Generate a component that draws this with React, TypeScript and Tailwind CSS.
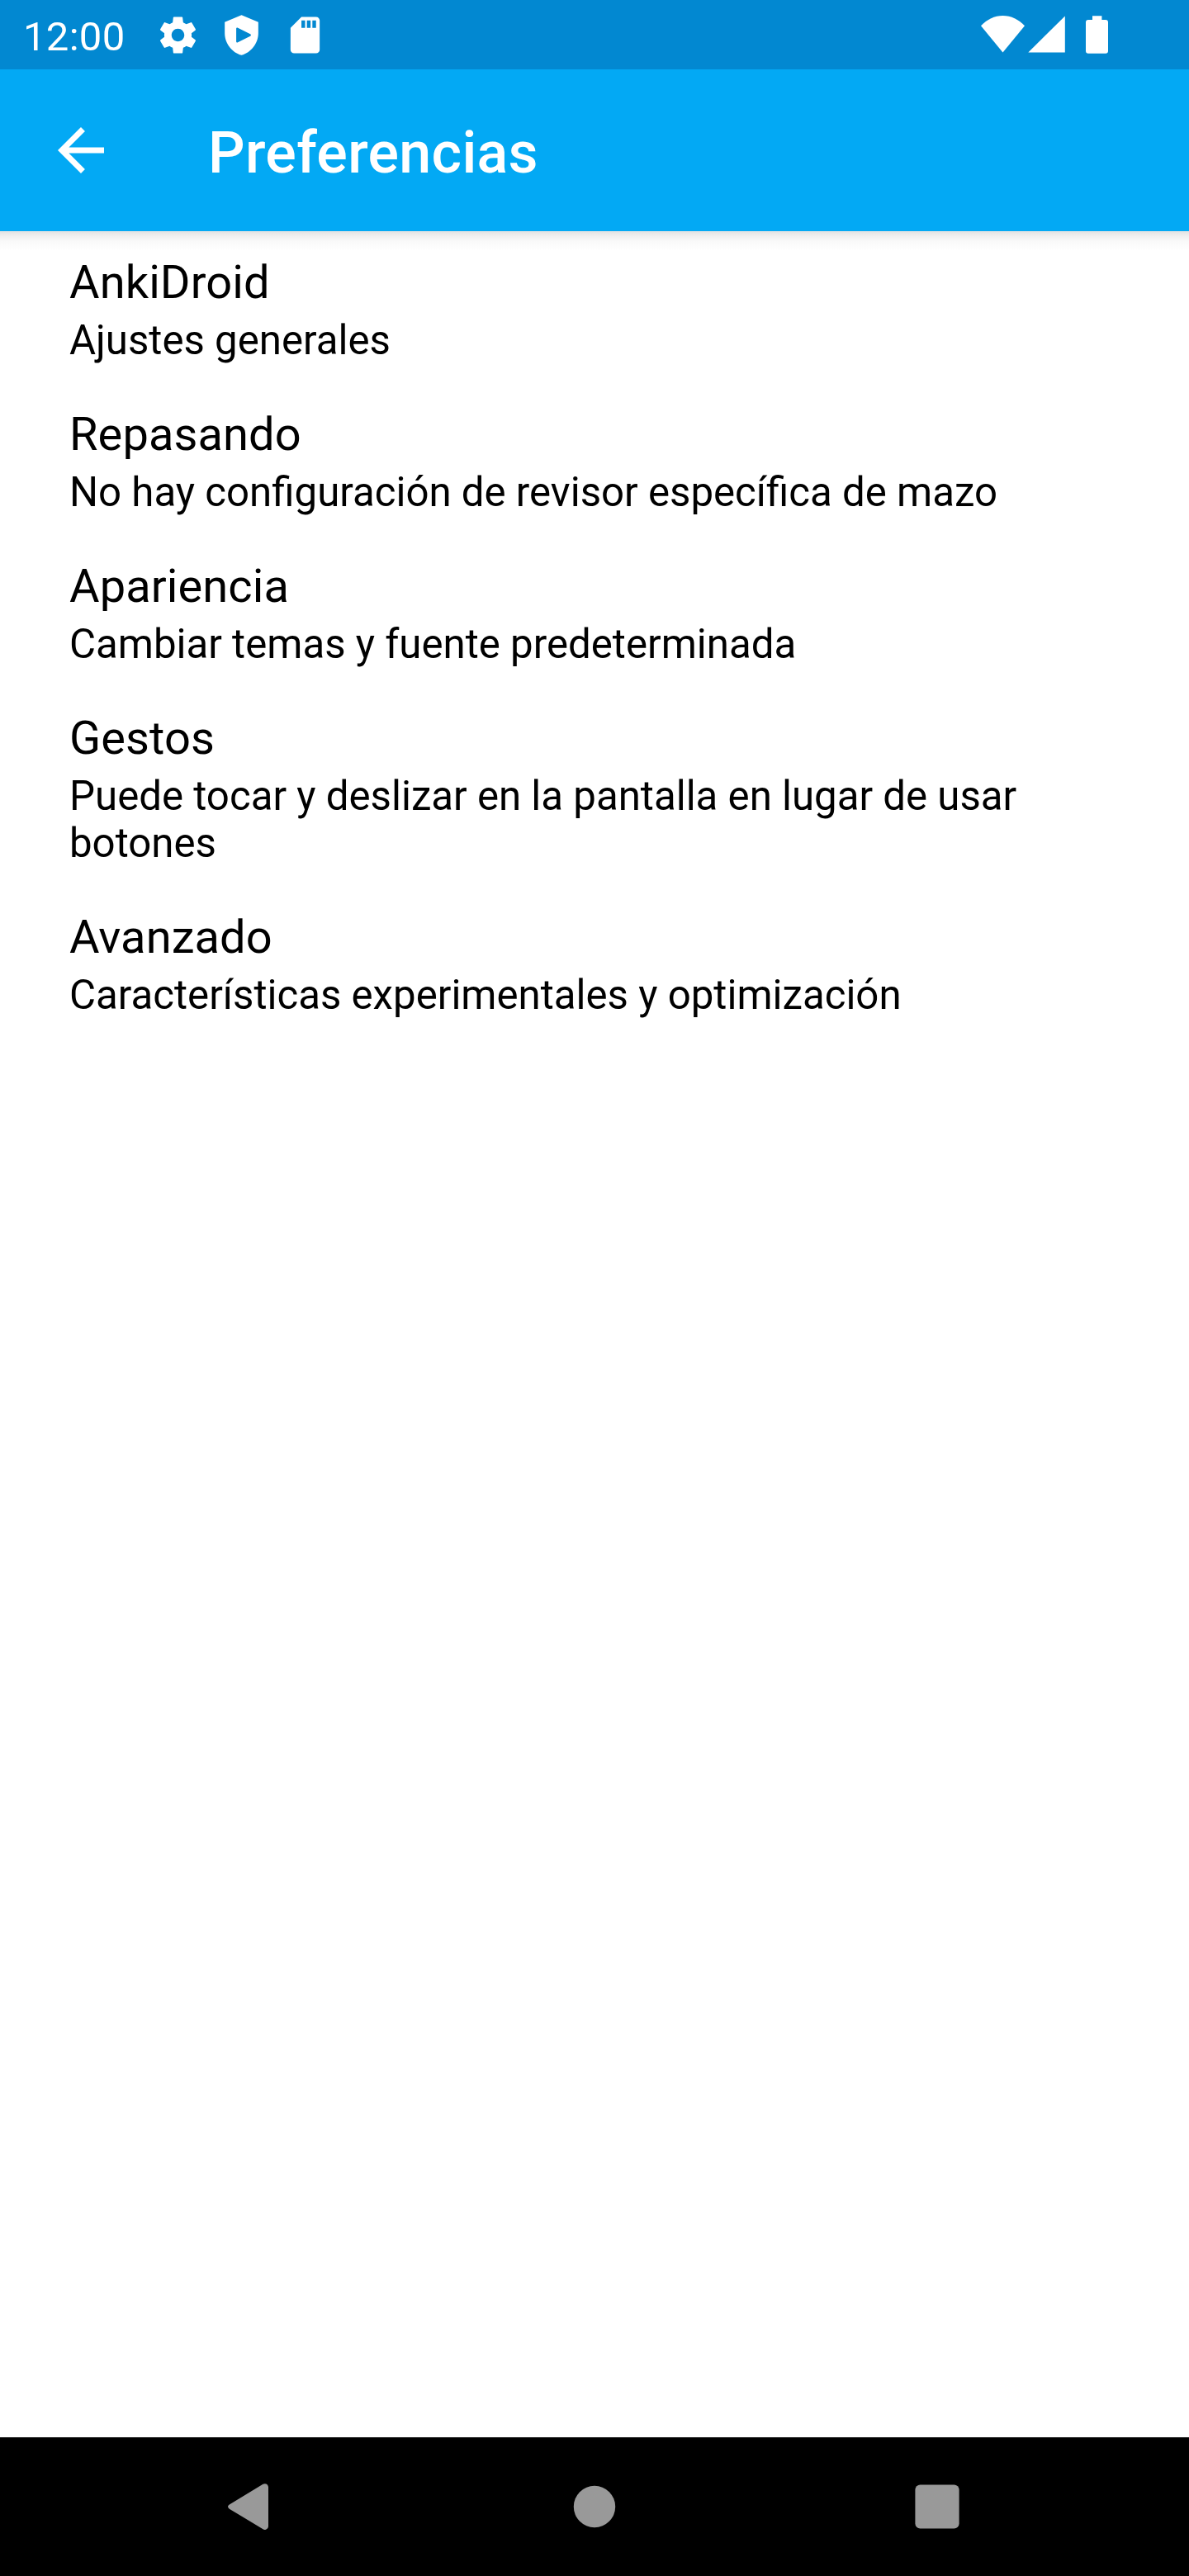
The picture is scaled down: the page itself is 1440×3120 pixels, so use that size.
import React from "react";

const preferences = [
  { title: "AnkiDroid", summary: "Ajustes generales" },
  { title: "Repasando", summary: "No hay configuración de revisor específica de mazo" },
  { title: "Apariencia", summary: "Cambiar temas y fuente predeterminada" },
  { title: "Gestos", summary: "Puede tocar y deslizar en la pantalla en lugar de usar botones" },
  { title: "Avanzado", summary: "Características experimentales y optimización" },
];

function StatusIcon({ d }: { d: string }) {
  return (
    <svg viewBox="0 0 24 24" className="h-[53px] w-[53px] shrink-0" fill="#fff" fillRule="evenodd">
      <path d={d} />
    </svg>
  );
}

function StatusBar() {
  return (
    <div className="flex h-[84px] justify-between bg-[#0288d1] pl-[28px] pr-[98px]">
      <div className="flex pt-4">
        <span className="w-[161px] text-[49px] leading-[57px] tracking-[0.3px] text-white">12:00</span>
        <div className="flex gap-6">
          <StatusIcon d="M19.43 12.98c.04-.32.07-.64.07-.98s-.03-.66-.07-.98l2.11-1.65c.19-.15.24-.42.12-.64l-2-3.46c-.12-.22-.39-.3-.61-.22l-2.49 1c-.52-.4-1.08-.73-1.69-.98l-.33-2.75Q14.450 2 14.200 2H9.800Q9.550 2 9.450 2.320l-.32 2.750c-.61.25-1.170.590-1.690.980l-2.490-1c-.23-.09-.49 0-.61.22l-2 3.460c-.13.22-.07.490.12.640l2.110 1.650c-.04.320-.07.650-.07.980s.03.660.070.980l-2.110 1.650c-.19.150-.24.420-.12.640l2 3.460c.12.220.390.300.610.220l2.490-1c.52.400 1.080.730 1.690.980l.32 2.750Q9.550 22 9.800 22h4.400Q14.450 22 14.540 21.680l.33-2.750c.61-.25 1.170-.59 1.690-.98l2.490 1c.23.090.490 0 .61-.22l2-3.460c.12-.22.070-.49-.12-.64l-2.110-1.650zM12 15.500c-1.930 0-3.500-1.570-3.500-3.500s1.570-3.500 3.500-3.500 3.500 1.570 3.500 3.500-1.570 3.500-3.500 3.500z" />
          <StatusIcon d="M12 1L2.800 4.900V11c0 5.550 4.040 10.740 9.200 12 5.160-1.260 9.200-6.450 9.200-12V4.900L12 1zM9.100 8.500c0-.5.5-.7.9-.5l6.800 3.400c.5.3.5.900 0 1.200L10 16c-.4.200-.9 0-.9-.5z" />
          <StatusIcon d="M18 2h-8L4.020 8 4 20c0 1.100.9 2 2 2h12c1.100 0 2-.9 2-2V4c0-1.100-.9-2-2-2zm-6 6h-2V4h2v4zm3 0h-2V4h2v4zm3 0h-2V4h2v4z" />
        </div>
      </div>
      <div className="flex pt-[19px]">
        <svg viewBox="0 0 53 45" className="h-[45px] w-[53px]" fill="#fff">
          <path d="M0 12.300C7.500 4.500 16.500 0 26.500 0S45.500 4.500 53 12.300L26.500 44.500z" />
        </svg>
        <svg viewBox="0 0 45 45" className="ml-1 h-[45px] w-[45px]" fill="#fff">
          <path d="M.3 44.500L44.800.4v44.100z" />
        </svg>
        <svg viewBox="0 0 27 46" className="ml-[25px] h-[46px] w-[27px]" fill="#fff">
          <path d="M8 .2h11.400v4.800H24a3 3 0 0 1 3 3v34.700a3 3 0 0 1-3 3H3a3 3 0 0 1-3-3V8a3 3 0 0 1 3-3h5z" />
        </svg>
      </div>
    </div>
  );
}

function AppBar() {
  return (
    <header className="flex h-[196px] items-start bg-[#03a9f4] pl-14 pt-14">
      <button aria-label="Atrás" className="mr-28 h-[84px] w-[84px]">
        <svg viewBox="0 0 24 24" className="h-[84px] w-[84px]" fill="#fff">
          <path d="M20 11H7.830l5.590-5.590L12 4l-8 8 8 8 1.410-1.410L7.830 13H20v-2z" />
        </svg>
      </button>
      <h1 className="mt-1 text-[70px] font-medium leading-[82px] tracking-[0.3px] text-white">Preferencias</h1>
    </header>
  );
}

function NavigationBar() {
  return (
    <nav className="flex h-[168px] items-center bg-black pl-[276px]">
      <svg viewBox="0 0 49 56" className="h-14 w-[49px]" fill="#999">
        <path d="M1.800 25.500L42.500.8Q44.500-.4 46.500.6T49 4v48q0 2.300-2.500 3.400t-4-.2L1.800 30.700Q0 29.500 0 28.100t1.800-2.600z" />
      </svg>
      <svg viewBox="0 0 52 52" className="ml-[369px] h-[52px] w-[52px]" fill="#999">
        <circle cx="26" cy="26" r="25.200" />
      </svg>
      <svg viewBox="0 0 54 54" className="ml-[362px] h-[54px] w-[54px]" fill="#999">
        <rect x=".4" y=".4" width="53.200" height="53.200" rx="6" />
      </svg>
    </nav>
  );
}

export default function App() {
  return (
    <div className="flex h-[3120px] w-[1440px] flex-col bg-white font-['Roboto',sans-serif]">
      <StatusBar />
      <AppBar />
      <main className="flex-1 bg-[linear-gradient(to_bottom,#e2e2e2_0px,#f0f0f0_6px,#fafafa_13px,#ffffff_24px)]">
        <ul>
          {preferences.map((item) => (
            <li key={item.title} className="px-[84px] pb-[23px] pt-[29px] text-black">
              <h2 className="text-[56px] leading-[66px] tracking-[0.1px]">{item.title}</h2>
              <p className="mt-[9px] text-[49.2px] leading-[57px]">{item.summary}</p>
            </li>
          ))}
        </ul>
      </main>
      <NavigationBar />
    </div>
  );
}
